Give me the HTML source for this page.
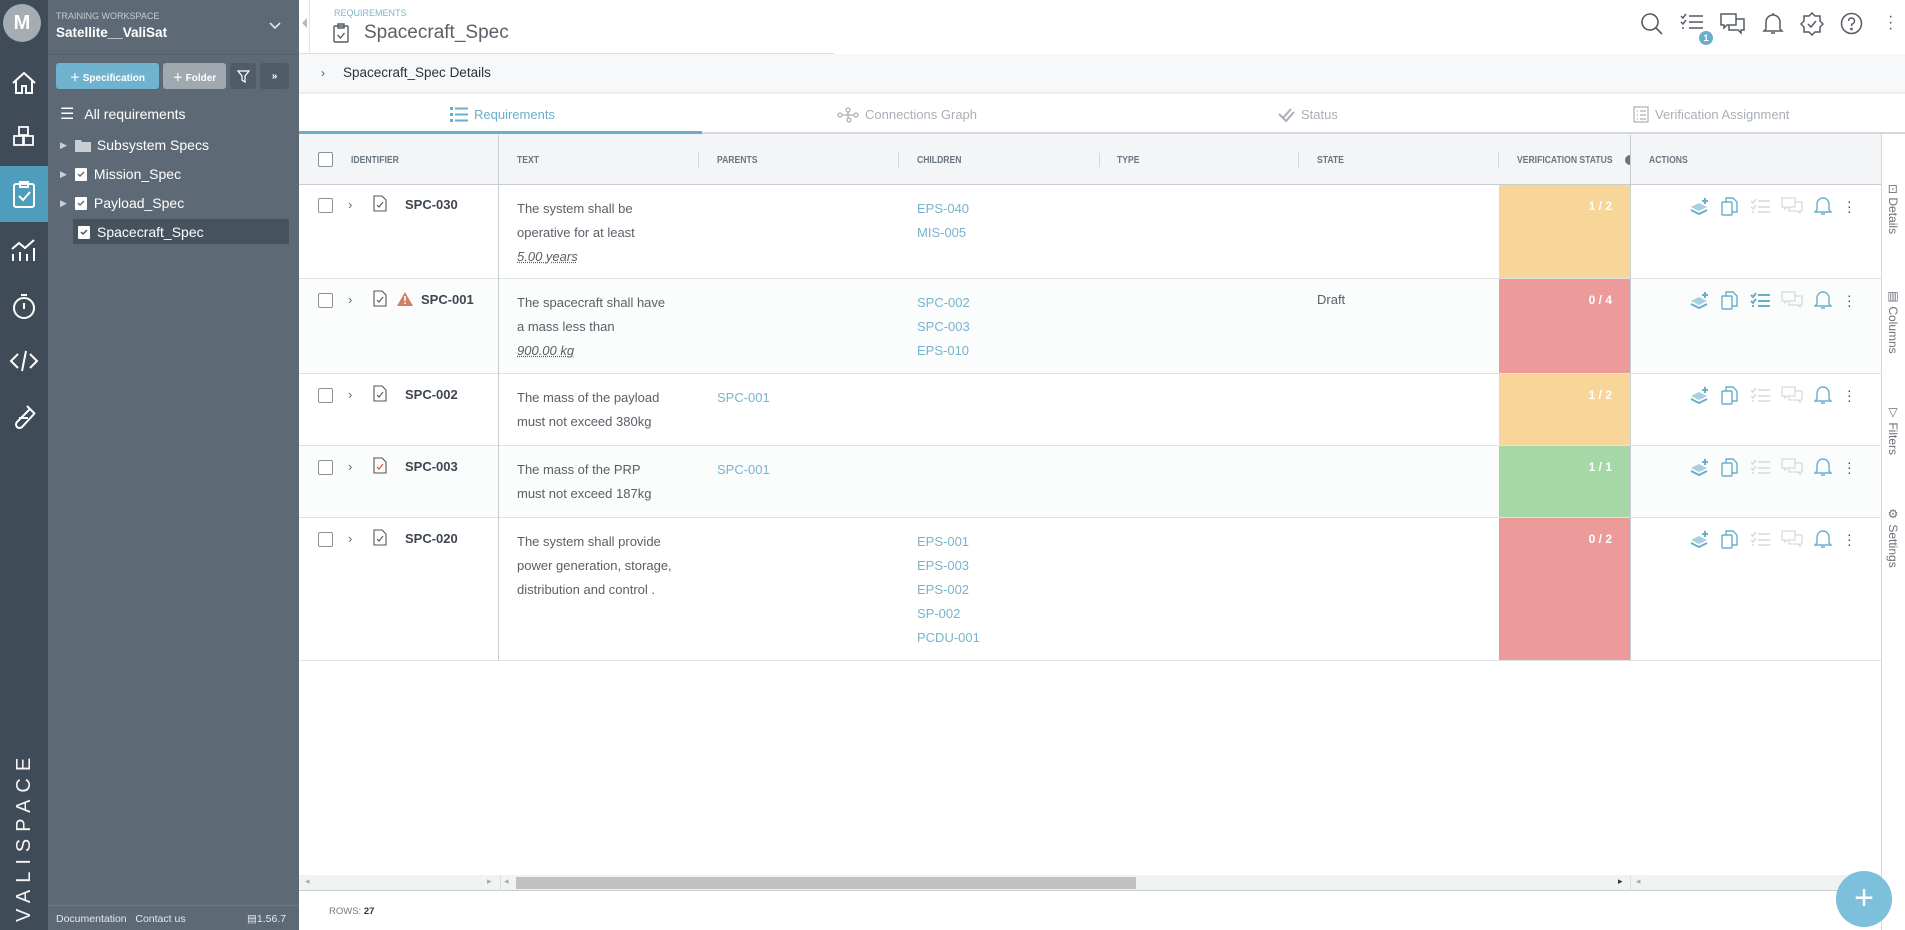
<!DOCTYPE html>
<html><head><meta charset="utf-8">
<style>
*{box-sizing:border-box;margin:0;padding:0}
body{width:1905px;height:930px;overflow:hidden;font-family:"Liberation Sans",sans-serif;background:#fff;position:relative;color:#4a4f55}
.a{position:absolute}
#ib{left:0;top:0;width:48px;height:930px;background:#3f4b56}
#sb{left:48px;top:0;width:251px;height:930px;background:#5d6a75;color:#fff}
.ico{position:absolute;left:0;width:48px;display:flex;justify-content:center;align-items:center}
.btn{position:absolute;top:63px;height:26px;border-radius:3px;font-size:10px;font-weight:bold;color:#fff;display:flex;align-items:center;justify-content:center}
.tr{position:absolute;left:0;font-size:14px;color:#fff;display:flex;align-items:center}
.th{position:absolute;top:135px;height:50px;font-size:10px;font-weight:bold;color:#6b7580;display:flex;align-items:center;transform:scaleX(.86);transform-origin:0 50%;white-space:nowrap}
.row{position:absolute;left:299px;width:1582px;border-bottom:1px solid #dfe3e8}
.cb{position:absolute;left:318px;width:15px;height:15px;border:1.5px solid #8a9096;border-radius:2px;background:#fff}
.id{position:absolute;font-size:13px;font-weight:bold;color:#3e4650}
.tx{position:absolute;left:517px;font-size:13px;line-height:24px;color:#5a6068}
.lk{position:absolute;font-size:13px;line-height:24px;color:#7ab3cc}
.vs{position:absolute;left:1499px;width:131px;color:#fff;font-size:12px;font-weight:bold;text-align:right;padding-right:18px;padding-top:14px}
.ac{position:absolute;left:1690px;display:flex;gap:11px;align-items:center}
.tab{position:absolute;top:95px;height:39px;font-size:13px;color:#a9b0b7;display:flex;align-items:center;gap:6px}
.vl{position:absolute;left:1886px;writing-mode:vertical-rl;font-size:12px;color:#6a727a}
</style></head><body>
<div id="ib" class="a">
 <div class="a" style="left:3px;top:4px;width:38px;height:38px;border-radius:50%;background:#a5acb3;color:#fff;font-weight:bold;font-size:20px;display:flex;align-items:center;justify-content:center">M</div>
 <div class="ico" style="top:68px;height:30px"><svg width="28" height="28" viewBox="0 0 28 28" fill="none" stroke="#fff" stroke-width="2"><path d="M3 14L14 4l11 10M6 12v12h6v-7h4v7h6V12"/></svg></div>
 <div class="ico" style="top:122px;height:30px"><svg width="28" height="28" viewBox="0 0 28 28" fill="none" stroke="#fff" stroke-width="1.8"><path d="M9 4h9v8H9zM4 13h9v9H4zM14 13h9v9h-9z"/></svg></div>
 <div class="ico" style="top:166px;height:56px;background:#4f9dbc"><svg width="26" height="30" viewBox="0 0 26 30" fill="none" stroke="#fff" stroke-width="2"><rect x="3" y="5" width="20" height="23" rx="2"/><path d="M9 3h8v5H9zM8 17l4 4 7-8"/></svg></div>
 <div class="ico" style="top:234px;height:30px"><svg width="30" height="30" viewBox="0 0 30 30" fill="none" stroke="#fff" stroke-width="2"><path d="M3 15l7-6 6 5 9-8M4 20v7M11 18v9M18 20v7M25 14v13"/></svg></div>
 <div class="ico" style="top:290px;height:32px"><svg width="28" height="30" viewBox="0 0 28 30" fill="none" stroke="#fff" stroke-width="2"><circle cx="14" cy="17" r="10"/><path d="M11 4h6M14 12v6"/></svg></div>
 <div class="ico" style="top:346px;height:30px"><svg width="30" height="26" viewBox="0 0 30 26" fill="none" stroke="#fff" stroke-width="2"><path d="M9 6L2 13l7 7M21 6l7 7-7 7M17 3l-4 20"/></svg></div>
 <div class="ico" style="top:402px;height:30px"><svg width="28" height="28" viewBox="0 0 28 28" fill="none" stroke="#fff" stroke-width="2"><path d="M17 3l8 8M20 6L7 19a3.5 3.5 0 0 0 5 5L24 11M9 15h9"/></svg></div>
 <div class="a" style="left:13px;top:922px;transform:rotate(-90deg);transform-origin:0 0;color:#fff;font-size:20px;font-weight:300;letter-spacing:7px;white-space:nowrap;-webkit-text-stroke:0;opacity:.95">VALISPACE</div>
</div>
<div id="sb" class="a">
 <div class="a" style="left:8px;top:11px;font-size:9px;color:#c5ccd2">TRAINING WORKSPACE</div>
 <div class="a" style="left:8px;top:25px;font-size:13.5px;font-weight:bold">Satellite__ValiSat</div>
 <svg class="a" style="left:221px;top:22px" width="12" height="8" viewBox="0 0 12 8" fill="none" stroke="#e0e4e8" stroke-width="1.6"><path d="M1 1l5 5 5-5"/></svg>
 <div class="a" style="left:0;top:54px;width:251px;height:1px;background:#55616c"></div>
 <div class="btn" style="left:8px;width:103px;background:#6fb3cf">＋ Specification</div>
 <div class="btn" style="left:115px;width:63px;background:#a0a8b0">＋ Folder</div>
 <div class="btn" style="left:182px;width:26px;background:#4f5b66"><svg width="13" height="13" viewBox="0 0 13 13" fill="none" stroke="#fff" stroke-width="1.2"><path d="M1 1h11L8 6v6L5 10V6z"/></svg></div>
 <div class="btn" style="left:212px;width:29px;background:#4f5b66;font-size:10px">»</div>
 <div class="tr" style="left:12px;top:104px;height:20px"><span style="font-size:16px;margin-right:10px">☰</span>All requirements</div>
 <div class="tr" style="left:12px;top:135px;height:20px"><span style="font-size:9px;color:#ccd;margin-right:8px">▶</span><svg width="16" height="13" viewBox="0 0 16 13" style="margin-right:6px"><path d="M0 1h6l1 2h9v10H0z" fill="#c8ced4"/></svg>Subsystem Specs</div>
 <div class="tr" style="left:12px;top:164px;height:20px"><span style="font-size:9px;color:#ccd;margin-right:8px">▶</span><svg width="12" height="14" viewBox="0 0 12 14" style="margin-right:7px"><rect x="0" y="1" width="12" height="13" rx="1" fill="#fff"/><path d="M3 7l2 2 4-4" stroke="#5d6a75" stroke-width="1.4" fill="none"/></svg>Mission_Spec</div>
 <div class="tr" style="left:12px;top:193px;height:20px"><span style="font-size:9px;color:#ccd;margin-right:8px">▶</span><svg width="12" height="14" viewBox="0 0 12 14" style="margin-right:7px"><rect x="0" y="1" width="12" height="13" rx="1" fill="#fff"/><path d="M3 7l2 2 4-4" stroke="#5d6a75" stroke-width="1.4" fill="none"/></svg>Payload_Spec</div>
 <div class="tr" style="left:25px;top:219px;width:216px;height:25px;background:#46525d;padding-left:5px"><svg width="12" height="14" viewBox="0 0 12 14" style="margin-right:7px"><rect x="0" y="1" width="12" height="13" rx="1" fill="#fff"/><path d="M3 7l2 2 4-4" stroke="#46525d" stroke-width="1.4" fill="none"/></svg>Spacecraft_Spec</div>
 <div class="a" style="left:0;top:905px;width:251px;height:1px;background:#6b7782"></div>
 <div class="a" style="left:8px;top:913px;font-size:10.5px;color:#e6e9ec">Documentation&nbsp;&nbsp; Contact us</div>
 <div class="a" style="left:199px;top:913px;font-size:10.5px;color:#e6e9ec">▤1.56.7</div>
</div>
<div class="a" style="left:299px;top:0;width:11px;height:53px;border-right:1px solid #e1e4e8"><div style="margin:18px 0 0 3px;width:0;height:0;border-top:5px solid transparent;border-bottom:5px solid transparent;border-right:5px solid #b5bbc1"></div></div>
<div class="a" style="left:334px;top:8px;font-size:9px;color:#7fb4cb">REQUIREMENTS</div>
<svg class="a" style="left:333px;top:23px" width="16" height="20" viewBox="0 0 16 20" fill="none" stroke="#555c63" stroke-width="1.4"><rect x="1" y="3" width="14" height="16" rx="1"/><path d="M5 1h6v4H5zM4.5 12l3 3 4-5"/></svg>
<div class="a" style="left:364px;top:22px;font-size:19px;color:#5a6168">Spacecraft_Spec</div>
<svg class="a" style="left:1640px;top:12px" width="24" height="24" viewBox="0 0 24 24" fill="none" stroke="#555c63" stroke-width="1.6"><circle cx="10" cy="10" r="8"/><path d="M16 16l6 6"/></svg>
<svg class="a" style="left:1680px;top:13px" width="24" height="22" viewBox="0 0 24 22" fill="none" stroke="#555c63" stroke-width="1.5"><path d="M1 3l2 2 3-4M1 9l2 2 3-4M9 3h14M9 9h14M9 15h14M2 15h2"/></svg>
<div class="a" style="left:1699px;top:31px;width:14px;height:14px;border-radius:50%;background:#6aaecc;color:#fff;font-size:9px;font-weight:bold;text-align:center;line-height:14px">1</div>
<svg class="a" style="left:1720px;top:13px" width="26" height="24" viewBox="0 0 26 24" fill="none" stroke="#555c63" stroke-width="1.5"><path d="M1 1h15v11H7l-3 3v-3H1zM16 6h8v11h-3v3l-3-3H9v-5"/></svg>
<svg class="a" style="left:1762px;top:12px" width="22" height="24" viewBox="0 0 22 24" fill="none" stroke="#555c63" stroke-width="1.5"><path d="M4 17V10a7 7 0 0 1 14 0v7l2 2H2zM9 21h4M11 1v2"/></svg>
<svg class="a" style="left:1800px;top:12px" width="24" height="24" viewBox="0 0 24 24" fill="none" stroke="#555c63" stroke-width="1.5"><path d="M12 1l3 3h5v5l3 3-3 3v5h-5l-3 3-3-3H4v-5l-3-3 3-3V4h5z"/><path d="M8 12l3 3 5-6"/></svg>
<svg class="a" style="left:1840px;top:12px" width="23" height="23" viewBox="0 0 23 23" fill="none" stroke="#555c63" stroke-width="1.5"><circle cx="11.5" cy="11.5" r="10"/><path d="M8.5 9a3 3 0 1 1 4 2.8c-1 .4-1 1.2-1 2.2"/><circle cx="11.5" cy="17" r=".6"/></svg>
<div class="a" style="left:1888px;top:14px;font-size:16px;color:#555c63;line-height:6px">·<br>·<br>·</div>
<div class="a" style="left:299px;top:53px;width:535px;height:1px;background:#dcdfe3"></div>
<div class="a" style="left:299px;top:54px;width:1606px;height:40px;background:#f7f8f9;border-bottom:2px solid #eceef0"></div>
<div class="a" style="left:321px;top:66px;font-size:12px;color:#555">›</div>
<div class="a" style="left:343px;top:65px;font-size:13.5px;color:#2d3238">Spacecraft_Spec Details</div>
<div class="tab" style="left:450px;color:#6aaecc"><svg width="18" height="15" viewBox="0 0 18 15" fill="#6aaecc"><rect x="0" y="0" width="3" height="3"/><rect x="0" y="6" width="3" height="3"/><rect x="0" y="12" width="3" height="3"/><rect x="5" y="0.5" width="13" height="2"/><rect x="5" y="6.5" width="13" height="2"/><rect x="5" y="12.5" width="13" height="2"/></svg>Requirements</div>
<div class="tab" style="left:837px"><svg width="22" height="16" viewBox="0 0 22 16" fill="none" stroke="#a9b0b7" stroke-width="1.3"><circle cx="3" cy="8" r="2"/><circle cx="11" cy="3" r="2"/><circle cx="19" cy="8" r="2"/><circle cx="12" cy="13" r="2"/><path d="M5 8h12M11 5v6"/></svg>Connections Graph</div>
<div class="tab" style="left:1278px"><svg width="17" height="14" viewBox="0 0 17 14" fill="none" stroke="#a9b0b7" stroke-width="2"><path d="M1 6l4 4 8-9M4 9l4 4 8-9"/></svg>Status</div>
<div class="tab" style="left:1633px"><svg width="16" height="17" viewBox="0 0 16 17" fill="none" stroke="#a9b0b7" stroke-width="1.2"><rect x="1" y="1" width="14" height="15"/><path d="M4 5h1M7 5h6M4 9h1M7 9h6M4 13h1M7 13h6"/></svg>Verification Assignment</div>
<div class="a" style="left:299px;top:132px;width:1606px;height:2px;background:#d4d8dc"></div>
<div class="a" style="left:299px;top:131px;width:403px;height:3px;background:#6aaecc"></div>
<div class="a" style="left:299px;top:134px;width:1582px;height:51px;background:#f4f5f7;border-bottom:1.5px solid #c8cdd3"></div>
<div class="cb" style="top:152px"></div>
<div class="th" style="left:351px">IDENTIFIER</div>
<div class="th" style="left:517px">TEXT</div>
<div class="a" style="left:698px;top:153px;width:1px;height:14px;background:#d4d8dc"></div>
<div class="th" style="left:717px">PARENTS</div>
<div class="a" style="left:898px;top:153px;width:1px;height:14px;background:#d4d8dc"></div>
<div class="th" style="left:917px">CHILDREN</div>
<div class="a" style="left:1099px;top:153px;width:1px;height:14px;background:#d4d8dc"></div>
<div class="th" style="left:1117px">TYPE</div>
<div class="a" style="left:1298px;top:153px;width:1px;height:14px;background:#d4d8dc"></div>
<div class="th" style="left:1317px">STATE</div>
<div class="a" style="left:1498px;top:153px;width:1px;height:14px;background:#d4d8dc"></div>
<div class="th" style="left:1517px">VERIFICATION STATUS</div>
<div class="a" style="left:1625px;top:155px;width:5px;height:10px;background:#6b7580;border-radius:5px 0 0 5px"></div>
<div class="th" style="left:1649px">ACTIONS</div>
<div class="row" style="top:185px;height:94px;background:#fff"></div>
<div class="row" style="top:279px;height:95px;background:#fbfcfc"></div>
<div class="row" style="top:374px;height:72px;background:#fff"></div>
<div class="row" style="top:446px;height:72px;background:#fbfcfc"></div>
<div class="row" style="top:518px;height:143px;background:#fff"></div>
<div class="a" style="left:498px;top:135px;width:1px;height:526px;background:#c8cdd3"></div>
<div class="a" style="left:1630px;top:135px;width:1px;height:526px;background:#c8cdd3"></div>
<div class="a" style="left:1881px;top:134px;width:1px;height:796px;background:#d4d8dc"></div>
<div class="vs" style="top:185px;height:93px;background:#f8d598">1 / 2</div>
<div class="vs" style="top:279px;height:94px;background:#ec9a9a">0 / 4</div>
<div class="vs" style="top:374px;height:71px;background:#f8d598">1 / 2</div>
<div class="vs" style="top:446px;height:71px;background:#a6d7a6">1 / 1</div>
<div class="vs" style="top:518px;height:142px;background:#ec9a9a">0 / 2</div>

<div class="cb" style="top:198px"></div><div class="a" style="left:348px;top:197px;color:#666;font-size:13px">›</div>
<svg class="a" style="left:373px;top:195px" width="14" height="17" viewBox="0 0 14 17" fill="none" stroke="#555" stroke-width="1.1"><path d="M1 1h8l4 4v11H1z"/><path d="M4 10l2 2 4-5"/></svg>
<div class="id" style="left:405px;top:197px">SPC-030</div>
<div class="tx" style="top:197px">The system shall be<br>operative for at least<br><i style="text-decoration:underline dotted">5.00 years</i></div>
<div class="lk" style="left:917px;top:197px">EPS-040<br>MIS-005</div>

<div class="cb" style="top:293px"></div><div class="a" style="left:348px;top:292px;color:#666;font-size:13px">›</div>
<svg class="a" style="left:373px;top:290px" width="14" height="17" viewBox="0 0 14 17" fill="none" stroke="#555" stroke-width="1.1"><path d="M1 1h8l4 4v11H1z"/><path d="M4 10l2 2 4-5"/></svg>
<svg class="a" style="left:397px;top:292px" width="16" height="14" viewBox="0 0 16 14"><path d="M8 0L16 14H0z" fill="#d67d63"/><rect x="7.2" y="4" width="1.6" height="5" fill="#fff"/><rect x="7.2" y="10.5" width="1.6" height="1.6" fill="#fff"/></svg>
<div class="id" style="left:421px;top:292px">SPC-001</div>
<div class="tx" style="top:291px">The spacecraft shall have<br>a mass less than<br><i style="text-decoration:underline dotted">900.00 kg</i></div>
<div class="lk" style="left:917px;top:291px">SPC-002<br>SPC-003<br>EPS-010</div>
<div class="a" style="left:1317px;top:292px;font-size:13px;color:#5a6068">Draft</div>

<div class="cb" style="top:388px"></div><div class="a" style="left:348px;top:387px;color:#666;font-size:13px">›</div>
<svg class="a" style="left:373px;top:385px" width="14" height="17" viewBox="0 0 14 17" fill="none" stroke="#555" stroke-width="1.1"><path d="M1 1h8l4 4v11H1z"/><path d="M4 10l2 2 4-5"/></svg>
<div class="id" style="left:405px;top:387px">SPC-002</div>
<div class="tx" style="top:386px">The mass of the payload<br>must not exceed 380kg</div>
<div class="lk" style="left:717px;top:386px">SPC-001</div>

<div class="cb" style="top:460px"></div><div class="a" style="left:348px;top:459px;color:#666;font-size:13px">›</div>
<svg class="a" style="left:373px;top:457px" width="14" height="17" viewBox="0 0 14 17" fill="none" stroke="#555" stroke-width="1.1"><path d="M1 1h8l4 4v11H1z"/><path d="M4 10l2 2 4-5" stroke="#c44"/></svg>
<div class="id" style="left:405px;top:459px">SPC-003</div>
<div class="tx" style="top:458px">The mass of the PRP<br>must not exceed 187kg</div>
<div class="lk" style="left:717px;top:458px">SPC-001</div>

<div class="cb" style="top:532px"></div><div class="a" style="left:348px;top:531px;color:#666;font-size:13px">›</div>
<svg class="a" style="left:373px;top:529px" width="14" height="17" viewBox="0 0 14 17" fill="none" stroke="#555" stroke-width="1.1"><path d="M1 1h8l4 4v11H1z"/><path d="M4 10l2 2 4-5"/></svg>
<div class="id" style="left:405px;top:531px">SPC-020</div>
<div class="tx" style="top:530px">The system shall provide<br>power generation, storage,<br>distribution and control .</div>
<div class="lk" style="left:917px;top:530px">EPS-001<br>EPS-003<br>EPS-002<br>SP-002<br>PCDU-001</div>

<div class="ac" style="top:196px"><svg width="20" height="18" viewBox="0 0 20 18"><path d="M1 10l8-4 8 4-8 4z" fill="#a9d0e0"/><path d="M1 13l8 4 8-4" stroke="#6aaecc" stroke-width="2" fill="none"/><path d="M15 1v6M12 4h6" stroke="#6aaecc" stroke-width="2"/></svg><svg width="18" height="19" viewBox="0 0 18 19" fill="none" stroke="#6aaecc" stroke-width="1.4"><rect x="1" y="5" width="10" height="13" rx="1"/><path d="M5 5V1h7l4 4v10h-5"/></svg><svg width="20" height="16" viewBox="0 0 20 16" fill="none" stroke="#d6dadd" stroke-width="1.5"><path d="M1 3l2 2 3-4M1 9l2 2 3-4M8 3h12M8 9h12M8 14h12M2 14h2"/></svg><svg width="22" height="18" viewBox="0 0 22 18" fill="none" stroke="#d6dadd" stroke-width="1.3"><path d="M1 1h13v9H6l-2 2v-2H1zM14 5h7v9h-2v2l-2-2H8v-4"/></svg><svg width="18" height="20" viewBox="0 0 18 20" fill="none" stroke="#6aaecc" stroke-width="1.4"><path d="M3 14V8a6 6 0 0 1 12 0v6l2 2H1zM7 18h4"/></svg><span style="color:#444;font-size:14px;line-height:5px;margin-left:4px">·<br>·<br>·</span></div>
<div class="ac" style="top:290px"><svg width="20" height="18" viewBox="0 0 20 18"><path d="M1 10l8-4 8 4-8 4z" fill="#a9d0e0"/><path d="M1 13l8 4 8-4" stroke="#6aaecc" stroke-width="2" fill="none"/><path d="M15 1v6M12 4h6" stroke="#6aaecc" stroke-width="2"/></svg><svg width="18" height="19" viewBox="0 0 18 19" fill="none" stroke="#6aaecc" stroke-width="1.4"><rect x="1" y="5" width="10" height="13" rx="1"/><path d="M5 5V1h7l4 4v10h-5"/></svg><svg width="20" height="16" viewBox="0 0 20 16" fill="none" stroke="#6aaecc" stroke-width="2"><path d="M1 3l2 2 3-4M1 9l2 2 3-4M8 3h12M8 9h12M8 14h12M2 14h2"/></svg><svg width="22" height="18" viewBox="0 0 22 18" fill="none" stroke="#d6dadd" stroke-width="1.3"><path d="M1 1h13v9H6l-2 2v-2H1zM14 5h7v9h-2v2l-2-2H8v-4"/></svg><svg width="18" height="20" viewBox="0 0 18 20" fill="none" stroke="#6aaecc" stroke-width="1.4"><path d="M3 14V8a6 6 0 0 1 12 0v6l2 2H1zM7 18h4"/></svg><span style="color:#444;font-size:14px;line-height:5px;margin-left:4px">·<br>·<br>·</span></div>
<div class="ac" style="top:385px"><svg width="20" height="18" viewBox="0 0 20 18"><path d="M1 10l8-4 8 4-8 4z" fill="#a9d0e0"/><path d="M1 13l8 4 8-4" stroke="#6aaecc" stroke-width="2" fill="none"/><path d="M15 1v6M12 4h6" stroke="#6aaecc" stroke-width="2"/></svg><svg width="18" height="19" viewBox="0 0 18 19" fill="none" stroke="#6aaecc" stroke-width="1.4"><rect x="1" y="5" width="10" height="13" rx="1"/><path d="M5 5V1h7l4 4v10h-5"/></svg><svg width="20" height="16" viewBox="0 0 20 16" fill="none" stroke="#d6dadd" stroke-width="1.5"><path d="M1 3l2 2 3-4M1 9l2 2 3-4M8 3h12M8 9h12M8 14h12M2 14h2"/></svg><svg width="22" height="18" viewBox="0 0 22 18" fill="none" stroke="#d6dadd" stroke-width="1.3"><path d="M1 1h13v9H6l-2 2v-2H1zM14 5h7v9h-2v2l-2-2H8v-4"/></svg><svg width="18" height="20" viewBox="0 0 18 20" fill="none" stroke="#6aaecc" stroke-width="1.4"><path d="M3 14V8a6 6 0 0 1 12 0v6l2 2H1zM7 18h4"/></svg><span style="color:#444;font-size:14px;line-height:5px;margin-left:4px">·<br>·<br>·</span></div>
<div class="ac" style="top:457px"><svg width="20" height="18" viewBox="0 0 20 18"><path d="M1 10l8-4 8 4-8 4z" fill="#a9d0e0"/><path d="M1 13l8 4 8-4" stroke="#6aaecc" stroke-width="2" fill="none"/><path d="M15 1v6M12 4h6" stroke="#6aaecc" stroke-width="2"/></svg><svg width="18" height="19" viewBox="0 0 18 19" fill="none" stroke="#6aaecc" stroke-width="1.4"><rect x="1" y="5" width="10" height="13" rx="1"/><path d="M5 5V1h7l4 4v10h-5"/></svg><svg width="20" height="16" viewBox="0 0 20 16" fill="none" stroke="#d6dadd" stroke-width="1.5"><path d="M1 3l2 2 3-4M1 9l2 2 3-4M8 3h12M8 9h12M8 14h12M2 14h2"/></svg><svg width="22" height="18" viewBox="0 0 22 18" fill="none" stroke="#d6dadd" stroke-width="1.3"><path d="M1 1h13v9H6l-2 2v-2H1zM14 5h7v9h-2v2l-2-2H8v-4"/></svg><svg width="18" height="20" viewBox="0 0 18 20" fill="none" stroke="#6aaecc" stroke-width="1.4"><path d="M3 14V8a6 6 0 0 1 12 0v6l2 2H1zM7 18h4"/></svg><span style="color:#444;font-size:14px;line-height:5px;margin-left:4px">·<br>·<br>·</span></div>
<div class="ac" style="top:529px"><svg width="20" height="18" viewBox="0 0 20 18"><path d="M1 10l8-4 8 4-8 4z" fill="#a9d0e0"/><path d="M1 13l8 4 8-4" stroke="#6aaecc" stroke-width="2" fill="none"/><path d="M15 1v6M12 4h6" stroke="#6aaecc" stroke-width="2"/></svg><svg width="18" height="19" viewBox="0 0 18 19" fill="none" stroke="#6aaecc" stroke-width="1.4"><rect x="1" y="5" width="10" height="13" rx="1"/><path d="M5 5V1h7l4 4v10h-5"/></svg><svg width="20" height="16" viewBox="0 0 20 16" fill="none" stroke="#d6dadd" stroke-width="1.5"><path d="M1 3l2 2 3-4M1 9l2 2 3-4M8 3h12M8 9h12M8 14h12M2 14h2"/></svg><svg width="22" height="18" viewBox="0 0 22 18" fill="none" stroke="#d6dadd" stroke-width="1.3"><path d="M1 1h13v9H6l-2 2v-2H1zM14 5h7v9h-2v2l-2-2H8v-4"/></svg><svg width="18" height="20" viewBox="0 0 18 20" fill="none" stroke="#6aaecc" stroke-width="1.4"><path d="M3 14V8a6 6 0 0 1 12 0v6l2 2H1zM7 18h4"/></svg><span style="color:#444;font-size:14px;line-height:5px;margin-left:4px">·<br>·<br>·</span></div>

<div class="vl" style="top:184px">⊡ Details</div>
<div class="vl" style="top:289px">▥ Columns</div>
<div class="vl" style="top:405px">▽ Filters</div>
<div class="vl" style="top:507px">⚙ Settings</div>

<div class="a" style="left:299px;top:875px;width:1582px;height:16px;background:#f1f2f2;border-bottom:1px solid #c8cdd3"></div>
<div class="a" style="left:500px;top:875px;width:1px;height:16px;background:#dcdfe2"></div>
<div class="a" style="left:1630px;top:875px;width:1px;height:16px;background:#dcdfe2"></div>
<div class="a" style="left:516px;top:877px;width:620px;height:12px;background:#c1c1bf"></div>
<div class="a" style="left:305px;top:876px;font-size:9px;color:#aaa">◂</div>
<div class="a" style="left:487px;top:876px;font-size:9px;color:#aaa">▸</div>
<div class="a" style="left:504px;top:876px;font-size:9px;color:#aaa">◂</div>
<div class="a" style="left:1618px;top:876px;font-size:9px;color:#333">▸</div>
<div class="a" style="left:1636px;top:876px;font-size:9px;color:#aaa">◂</div>
<div class="a" style="left:329px;top:906px;font-size:9.5px;color:#777">ROWS: <b style="color:#333">27</b></div>
<div class="a" style="left:1836px;top:871px;width:56px;height:56px;border-radius:50%;background:#7cc0dc;color:#fff;font-size:34px;text-align:center;line-height:54px">+</div>
</body></html>
